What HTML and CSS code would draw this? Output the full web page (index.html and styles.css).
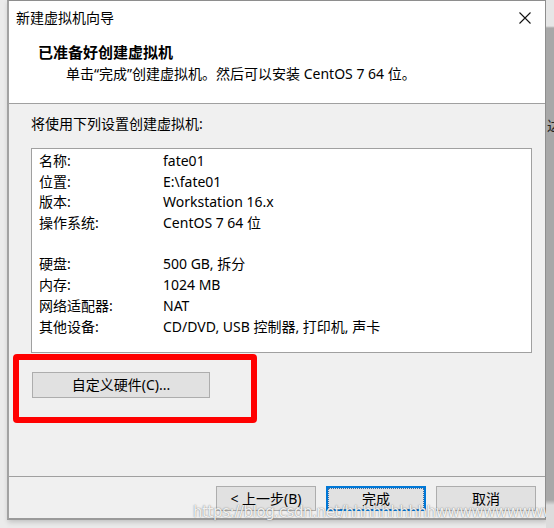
FILE: index.html
```html
<!DOCTYPE html>
<html lang="zh-CN">
<head>
<meta charset="utf-8">
<title>新建虚拟机向导</title>
<link rel="stylesheet" href="styles.css">
</head>
<body>
<div class="desktop">
  <div class="gutter-left"></div>
  <div class="dialog">
    <div class="header">
      <div class="titlebar">
        <span class="title">新建虚拟机向导</span>
        <span class="close">
          <svg width="12" height="12" viewBox="0 0 12 12"><path d="M0.5 0.5 L11.5 11.5 M11.5 0.5 L0.5 11.5" stroke="#111" stroke-width="1.1" fill="none"/></svg>
        </span>
      </div>
      <div class="heading">已准备好创建虚拟机</div>
      <div class="subheading">单击“完成”创建虚拟机。然后可以安装 CentOS 7 64 位。</div>
    </div>
    <div class="body">
      <div class="intro">将使用下列设置创建虚拟机:</div>
      <div class="listbox">
        <div class="row"><span>名称:</span><span>fate01</span></div>
        <div class="row"><span>位置:</span><span>E:\fate01</span></div>
        <div class="row"><span>版本:</span><span>Workstation 16.x</span></div>
        <div class="row"><span>操作系统:</span><span>CentOS 7 64 位</span></div>
        <div class="row blank"><span></span><span></span></div>
        <div class="row"><span>硬盘:</span><span>500 GB, 拆分</span></div>
        <div class="row"><span>内存:</span><span>1024 MB</span></div>
        <div class="row"><span>网络适配器:</span><span>NAT</span></div>
        <div class="row"><span>其他设备:</span><span>CD/DVD, USB 控制器, 打印机, 声卡</span></div>
      </div>
      <div class="highlight">
        <div class="btn custom">自定义硬件(C)...</div>
      </div>
    </div>
    <div class="footer">
      <div class="btn">&lt; 上一步(B)</div>
      <div class="btn default"><span class="focus">完成</span></div>
      <div class="btn">取消</div>
    </div>
    <div class="watermark">https://blog.csdn.net/hhhhhhhhhhwwwwwwwwww</div>
  </div>
  <div class="gutter-right"><span class="peek">达</span></div>
</div>
</body>
</html>
```

FILE: styles.css
```css
* { box-sizing: border-box; }
html, body { margin: 0; padding: 0; }
body {
  width: 554px;
  height: 528px;
  overflow: hidden;
  background: #ececec;
  font-family: "Noto Sans", "Noto Sans CJK SC", sans-serif;
  font-size: 14px;
  color: #000;
}
.desktop {
  display: flex;
  width: 554px;
  height: 528px;
  background: #eaeaea;
}
.gutter-left {
  width: 7px;
  height: 528px;
  background: #ebebeb;
}
.dialog {
  position: relative;
  width: 539px;
  height: 520px;
  border: 1px solid #8e8e8e;
  border-left: 2px solid #a2a2a2;
  border-bottom: 2px solid #9a9a9a;
  background: #f0f0f0;
  display: flex;
  flex-direction: column;
  box-shadow: 1px 2px 5px rgba(0,0,0,0.18);
}
.gutter-right {
  flex: 1;
  height: 528px;
  background: linear-gradient(#e6e6e6 0, #e6e6e6 26px, #a8a8a8 28px, #a8a8a8 500px, #dcdcdc 505px);
  overflow: hidden;
  position: relative;
}
.peek {
  position: absolute;
  left: 1px;
  top: 115px;
  font-family: "Noto Sans CJK SC", sans-serif;
  font-size: 14px;
  color: #222;
}
.header {
  height: 103px;
  background: #fff;
  border-bottom: 1px solid #a0a0a0;
}
.titlebar {
  height: 34px;
  display: flex;
  align-items: center;
  justify-content: space-between;
  padding-left: 7px;
  padding-right: 14px;
}
.title { line-height: 20px; }
.close { display: flex; width: 12px; height: 12px; }
.heading {
  margin-top: 7px;
  padding-left: 29px;
  font-weight: bold;
  font-size: 15px;
  line-height: 20px;
}
.subheading {
  margin-top: 2px;
  padding-left: 57px;
  line-height: 20px;
}
.body {
  flex: 1;
  padding-top: 9px;
}
.intro {
  padding-left: 22px;
  line-height: 21px;
}
.listbox {
  margin-top: 14px;
  margin-left: 22px;
  width: 501px;
  height: 205px;
  background: #fff;
  border: 1px solid #a0a0a0;
  padding-top: 2px;
  padding-left: 7px;
}
.row {
  display: grid;
  grid-template-columns: 124px 1fr;
  height: 20.7px;
  line-height: 20.7px;
  white-space: nowrap;
}
.highlight {
  margin-top: 1px;
  margin-left: 4px;
  width: 244px;
  height: 69px;
  border: 6px solid #ff0000;
  border-radius: 4px;
  padding-top: 12px;
  padding-left: 13px;
}
.btn {
  height: 25px;
  background: #e1e1e1;
  border: 1px solid #adadad;
  display: flex;
  align-items: center;
  justify-content: center;
  line-height: 20px;
  white-space: nowrap;
}
.btn.custom {
  width: 178px;
  height: 26px;
}
.footer {
  height: 42px;
  border-top: 1px solid #a0a0a0;
  display: flex;
  justify-content: flex-end;
  align-items: flex-start;
  gap: 10px;
  padding-top: 9px;
  padding-right: 9px;
}
.footer .btn { width: 100px; }
.btn.default {
  border: 1px solid #0078d7;
  box-shadow: inset 0 0 0 1px #0078d7;
}
.focus {
  display: flex;
  align-items: center;
  justify-content: center;
  width: 94px;
  height: 20px;
  line-height: 20px;
  outline: 1px dotted #3b6ea5;
  outline-offset: 0;
}
.watermark {
  position: absolute;
  left: 184px;
  top: 502px;
  font-family: "DejaVu Sans", sans-serif;
  font-size: 15px;
  letter-spacing: -0.4px;
  line-height: 18px;
  color: rgba(255,255,255,0.9);
  text-shadow: 0 0 1px rgba(60,60,60,0.55), 0 0 2px rgba(60,60,60,0.3);
  white-space: nowrap;
  pointer-events: none;
}
```
